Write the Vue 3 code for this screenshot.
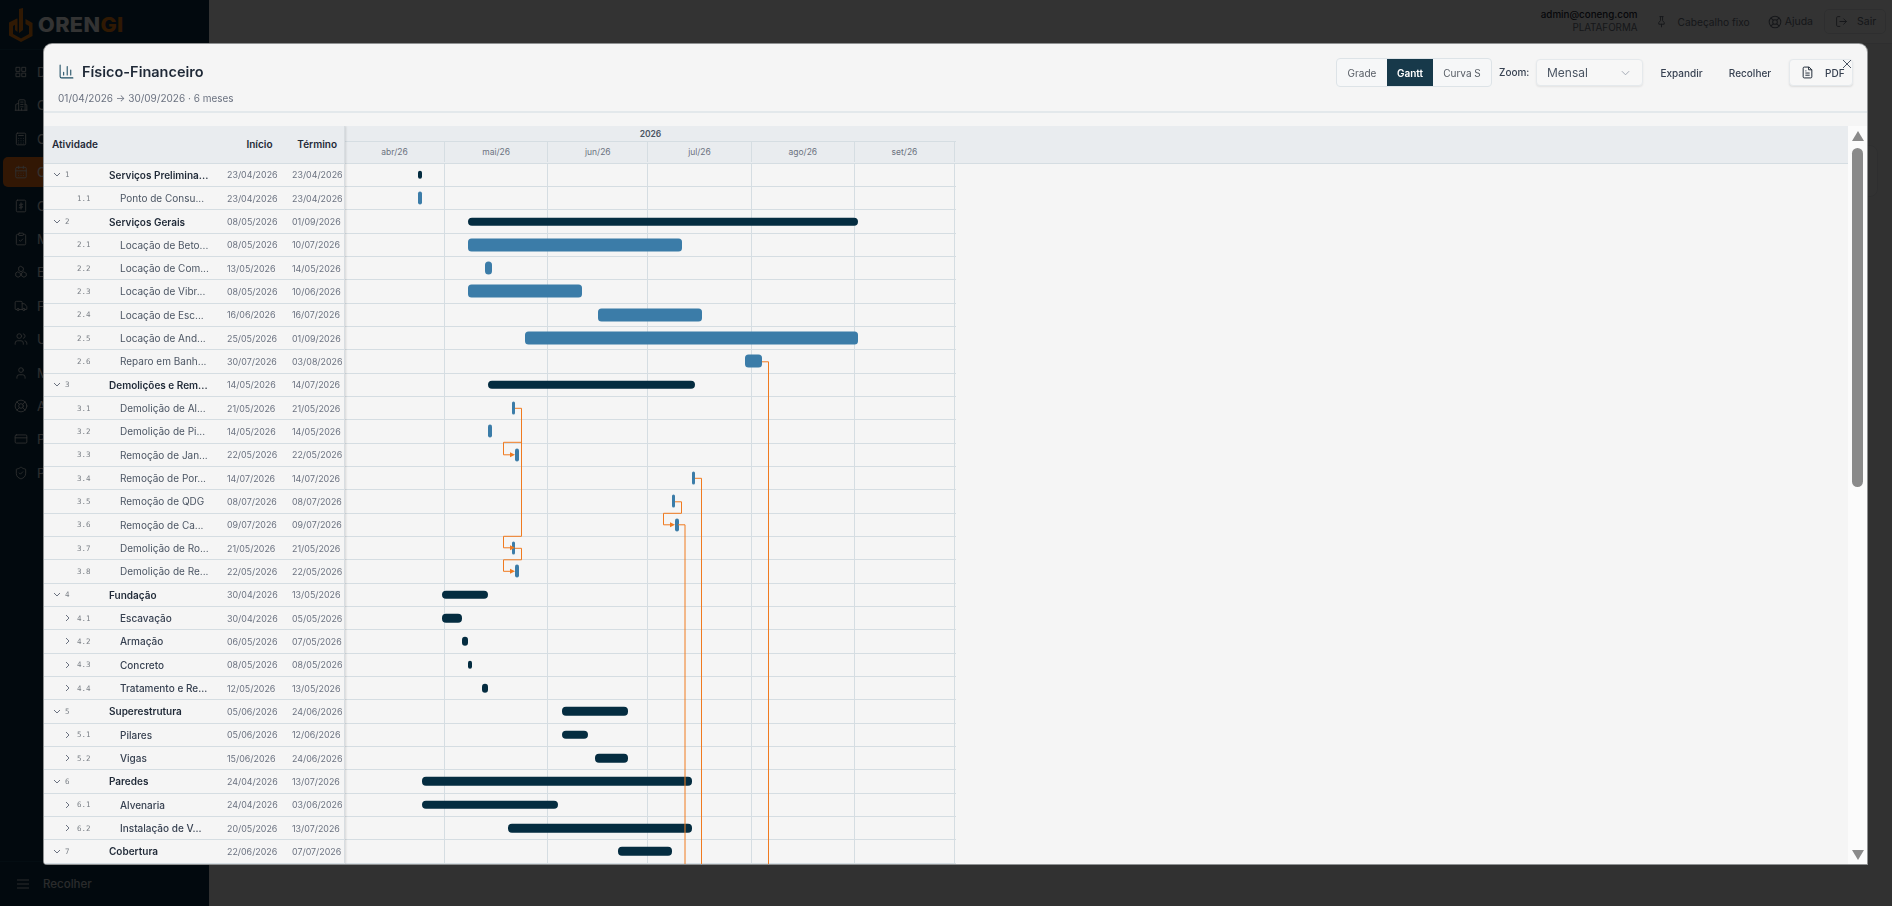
<script setup>
const navItems = [
  { label: 'Dashboard', d: 'M4 4h6v7H4zM14 4h6v7h-6zM4 14h6v6H4zM14 14h6v6h-6z' },
  { label: 'Obras', d: 'M3 21V11l5-2M8 21V5a2 2 0 0 1 2-2h7a2 2 0 0 1 2 2v16M19 11h1a2 2 0 0 1 2 2v8M2 21h20M11.500 7h4M11.500 11h4M11.500 15h4M13 21v-3' },
  { label: 'Orçamentos', d: 'M6 2h12a2 2 0 0 1 2 2v16a2 2 0 0 1-2 2H6a2 2 0 0 1-2-2V4a2 2 0 0 1 2-2zM8 6h8M8 11h.01M12 11h.01M16 11h.01M8 15h.01M12 15h.01M16 15h.01M8 19h.01M12 19h.01M16 19h.01' },
  { label: 'Cronograma', d: 'M5 4h14a2 2 0 0 1 2 2v14a2 2 0 0 1-2 2H5a2 2 0 0 1-2-2V6a2 2 0 0 1 2-2zM8 2v4M16 2v4M3 10h18M8 14h.01M12 14h.01M16 14h.01M8 18h.01M12 18h.01M16 18h.01', active: true },
  { label: 'Custos', d: 'M6 2h12a2 2 0 0 1 2 2v16a2 2 0 0 1-2 2H6a2 2 0 0 1-2-2V4a2 2 0 0 1 2-2zM12 6.500v11M15 9h-4a1.500 1.500 0 0 0 0 3h2a1.500 1.500 0 0 1 0 3H9' },
  { label: 'Medições', d: 'M9 2h6a1 1 0 0 1 1 1v2a1 1 0 0 1-1 1H9a1 1 0 0 1-1-1V3a1 1 0 0 1 1-1zM16 4h2a2 2 0 0 1 2 2v14a2 2 0 0 1-2 2H6a2 2 0 0 1-2-2V6a2 2 0 0 1 2-2h2M9 14l2 2 4-4' },
  { label: 'Estoque', d: 'M12 2.500l4 2.300v4.400l-4 2.300-4-2.300V4.800zM7 12l4 2.300v4.400L7 21l-4-2.300v-4.400zM17 12l4 2.300v4.400L17 21l-4-2.300v-4.400z' },
  { label: 'Fornecedores', d: 'M14 18V6a2 2 0 0 0-2-2H4a2 2 0 0 0-2 2v11a1 1 0 0 0 1 1h2M15 18H9M19 18h2a1 1 0 0 0 1-1v-3.650a1 1 0 0 0-.22-.62l-3.480-4.350A1 1 0 0 0 17.520 8H14M9 18a2 2 0 1 1-4 0 2 2 0 0 1 4 0zM19 18a2 2 0 1 1-4 0 2 2 0 0 1 4 0z' },
  { label: 'Usuários', d: 'M16 21v-2a4 4 0 0 0-4-4H6a4 4 0 0 0-4 4v2M13 7a4 4 0 1 1-8 0 4 4 0 0 1 8 0zM22 21v-2a4 4 0 0 0-3-3.870M16 3.130a4 4 0 0 1 0 7.750' },
  { label: 'Meu perfil', d: 'M19 21v-2a4 4 0 0 0-4-4H9a4 4 0 0 0-4 4v2M16 7a4 4 0 1 1-8 0 4 4 0 0 1 8 0z' },
  { label: 'Ajuda', d: 'M22 12a10 10 0 1 1-20 0 10 10 0 0 1 20 0zM16 12a4 4 0 1 1-8 0 4 4 0 0 1 8 0zM4.900 4.900l4.300 4.300M14.800 14.800l4.300 4.300M14.800 9.200l4.300-4.300M4.900 19.100l4.300-4.300' },
  { label: 'Planos', d: 'M4 5h16a2 2 0 0 1 2 2v10a2 2 0 0 1-2 2H4a2 2 0 0 1-2-2V7a2 2 0 0 1 2-2zM2 10h20' },
  { label: 'Privacidade', d: 'M20 13c0 5-3.500 7.500-7.660 8.950a1 1 0 0 1-.67-.01C7.500 20.500 4 18 4 13V6a1 1 0 0 1 1-1c2 0 4.500-1.200 6.240-2.720a1.170 1.170 0 0 1 1.520 0C14.510 3.810 17 5 19 5a1 1 0 0 1 1 1zM9 12l2 2 4-4' }
]

const pxPerDay = 10 / 3
const monthLengths = [30, 31, 30, 31, 31, 30]
const months = [
  { label: 'abr/26', width: 30 * pxPerDay },
  { label: 'mai/26', width: 31 * pxPerDay },
  { label: 'jun/26', width: 30 * pxPerDay },
  { label: 'jul/26', width: 31 * pxPerDay },
  { label: 'ago/26', width: 31 * pxPerDay },
  { label: 'set/26', width: 30 * pxPerDay }
]

const dayIndex = (s) => {
  const [d, m] = s.split('/').map(Number)
  let total = d - 1
  for (let i = 0; i < m - 4; i++) total += monthLengths[i]
  return total
}

// type: g = group row, s = sub-group (dark bar), t = task (blue bar)
const raw = [
  ['1', 'Serviços Prelimina...', '23/04/2026', '23/04/2026', 'g'],
  ['1.1', 'Ponto de Consu...', '23/04/2026', '23/04/2026', 't'],
  ['2', 'Serviços Gerais', '08/05/2026', '01/09/2026', 'g'],
  ['2.1', 'Locação de Beto...', '08/05/2026', '10/07/2026', 't'],
  ['2.2', 'Locação de Com...', '13/05/2026', '14/05/2026', 't'],
  ['2.3', 'Locação de Vibr...', '08/05/2026', '10/06/2026', 't'],
  ['2.4', 'Locação de Esc...', '16/06/2026', '16/07/2026', 't'],
  ['2.5', 'Locação de And...', '25/05/2026', '01/09/2026', 't'],
  ['2.6', 'Reparo em Banh...', '30/07/2026', '03/08/2026', 't'],
  ['3', 'Demolições e Rem...', '14/05/2026', '14/07/2026', 'g'],
  ['3.1', 'Demolição de Al...', '21/05/2026', '21/05/2026', 't'],
  ['3.2', 'Demolição de Pi...', '14/05/2026', '14/05/2026', 't'],
  ['3.3', 'Remoção de Jan...', '22/05/2026', '22/05/2026', 't'],
  ['3.4', 'Remoção de Por...', '14/07/2026', '14/07/2026', 't'],
  ['3.5', 'Remoção de QDG', '08/07/2026', '08/07/2026', 't'],
  ['3.6', 'Remoção de Ca...', '09/07/2026', '09/07/2026', 't'],
  ['3.7', 'Demolição de Ro...', '21/05/2026', '21/05/2026', 't'],
  ['3.8', 'Demolição de Re...', '22/05/2026', '22/05/2026', 't'],
  ['4', 'Fundação', '30/04/2026', '13/05/2026', 'g'],
  ['4.1', 'Escavação', '30/04/2026', '05/05/2026', 's'],
  ['4.2', 'Armação', '06/05/2026', '07/05/2026', 's'],
  ['4.3', 'Concreto', '08/05/2026', '08/05/2026', 's'],
  ['4.4', 'Tratamento e Re...', '12/05/2026', '13/05/2026', 's'],
  ['5', 'Superestrutura', '05/06/2026', '24/06/2026', 'g'],
  ['5.1', 'Pilares', '05/06/2026', '12/06/2026', 's'],
  ['5.2', 'Vigas', '15/06/2026', '24/06/2026', 's'],
  ['6', 'Paredes', '24/04/2026', '13/07/2026', 'g'],
  ['6.1', 'Alvenaria', '24/04/2026', '03/06/2026', 's'],
  ['6.2', 'Instalação de V...', '20/05/2026', '13/07/2026', 's'],
  ['7', 'Cobertura', '22/06/2026', '07/07/2026', 'g']
]

const rows = raw.map(([code, name, start, end, type]) => {
  const a = dayIndex(start)
  const b = dayIndex(end)
  return {
    code, name, start, end, type,
    barStyle: {
      left: (a * pxPerDay).toFixed(2) + 'px',
      width: Math.max((b - a + 1) * pxPerDay, 3.6).toFixed(2) + 'px'
    }
  }
})

const links = [
  'M515 408H521.500V536H503.500V547.500H511',
  'M521.500 442H503.500V454.500H511',
  'M515 548H521.500V559.500H503.500V571H511',
  'M675 501.500H681.500V513H663.500V524.500H671',
  'M678 524.500H685V864',
  'M695 478H701.500V864',
  'M762 361.500H768.500V864'
]
const arrows = [
  '510,545 515,547.500 510,550',
  '510,452 515,454.500 510,457',
  '510,568.500 515,571 510,573.500',
  '670,522 675,524.500 670,527'
]
</script>

<template>
  <div class="page">
    <aside class="sidebar">
      <div class="brand">
        <svg class="brand-mark" viewBox="0 0 26 34" width="26" height="34">
          <path d="M9 12.500v5l-4 2.500v8l8 4.500 8-4.500v-8l-3.500-2v-5l7 4v13L13 36 1 29.500v-13z" fill="#f07f13" transform="translate(0 -2)" />
          <path d="M11 1l4-1v22l-4 3zM7 12l2.500-1.500V24L7 22z" fill="#f07f13" />
        </svg>
        <span class="brand-name">OREN<em>GI</em></span>
      </div>
      <nav class="nav">
        <a v-for="item in navItems" :key="item.label" class="nav-item" :class="{ active: item.active }">
          <svg viewBox="0 0 24 24" width="14" height="14" class="nav-icon"><path :d="item.d" /></svg>
          <span>{{ item.label }}</span>
        </a>
      </nav>
      <div class="side-foot">
        <svg viewBox="0 0 12 10" width="12" height="10"><path d="M0 1h12M0 5h12M0 9h12" /></svg>
        <span>Recolher</span>
      </div>
    </aside>

    <main class="main">
      <header class="topbar">
        <div class="account">
          <strong>admin@coneng.com</strong>
          <span>PLATAFORMA</span>
        </div>
        <span class="top-link pin">
          <svg viewBox="0 0 24 24" width="13" height="13"><path d="M12 17v5M9 3h6M10 3v7.500l-3 3.500v3h10v-3l-3-3.500V3" /></svg>
          Cabeçalho fixo
        </span>
        <span class="top-link help">
          <svg viewBox="0 0 24 24" width="14" height="14"><path d="M22 12a10 10 0 1 1-20 0 10 10 0 0 1 20 0zM16 12a4 4 0 1 1-8 0 4 4 0 0 1 8 0zM4.900 4.900l4.300 4.300M14.800 14.800l4.300 4.300M14.800 9.200l4.300-4.300M4.900 19.100l4.300-4.300" /></svg>
          Ajuda
        </span>
        <span class="logout">
          <svg viewBox="0 0 24 24" width="13" height="13"><path d="M9 3H5a2 2 0 0 0-2 2v14a2 2 0 0 0 2 2h4M16 17l5-5-5-5M21 12H9" /></svg>
          Sair
        </span>
      </header>
      <div class="content">
        <div class="bg-card"></div>
      </div>
    </main>

    <div class="overlay">
      <section class="modal">
        <header class="modal-head">
          <div class="head-text">
            <h2>
              <svg viewBox="0 0 24 24" width="17" height="17"><path d="M3 3v16a2 2 0 0 0 2 2h16M8 17v-4M13 17V5M18 17v-7" /></svg>
              Físico-Financeiro
            </h2>
            <p>01/04/2026 → 30/09/2026 · 6 meses</p>
          </div>
          <div class="tools">
            <div class="segment">
              <button class="seg-grade">Grade</button>
              <button class="seg-gantt">Gantt</button>
              <button class="seg-curve">Curva S</button>
            </div>
            <span class="zoom-label">Zoom:</span>
            <div class="select">
              <span>Mensal</span>
              <svg viewBox="0 0 10 6" width="9" height="6"><path d="M1 1l4 4 4-4" /></svg>
            </div>
            <button class="plain expand">Expandir</button>
            <button class="plain collapse">Recolher</button>
            <button class="pdf">
              <svg viewBox="0 0 24 24" width="13" height="13"><path d="M15 2H6a2 2 0 0 0-2 2v16a2 2 0 0 0 2 2h12a2 2 0 0 0 2-2V7zM14 2v5h6M8 13h8M8 17h8M8 9h2" /></svg>
              PDF
            </button>
          </div>
          <svg class="close" viewBox="0 0 10 10" width="10" height="10"><path d="M1 1l8 8M9 1l-8 8" /></svg>
        </header>

        <div class="gantt">
          <div class="table">
            <div class="table-head">
              <span class="th-name">Atividade</span>
              <span class="th-start">Início</span>
              <span class="th-end">Término</span>
            </div>
            <div v-for="r in rows" :key="r.code" class="tr" :class="'type-' + r.type">
              <div class="tree">
                <span class="chev">
                  <svg v-if="r.type === 'g'" viewBox="0 0 8 5" width="8" height="5"><path d="M1 1l3 3 3-3" /></svg>
                  <svg v-else-if="r.type === 's'" viewBox="0 0 5 8" width="5" height="8"><path d="M1 1l3 3-3 3" /></svg>
                </span>
                <span class="code">{{ r.code }}</span>
                <span class="name">{{ r.name }}</span>
              </div>
              <span class="date">{{ r.start }}</span>
              <span class="date">{{ r.end }}</span>
            </div>
          </div>

          <div class="timeline">
            <div class="tl-head">
              <div class="tl-year">2026</div>
              <div class="tl-months">
                <div v-for="m in months" :key="m.label" class="tl-month" :style="{ width: m.width + 'px' }">{{ m.label }}</div>
              </div>
            </div>
            <div class="chart">
              <div v-for="r in rows" :key="r.code" class="chart-row">
                <div v-for="m in months" :key="m.label" class="chart-cell" :style="{ width: m.width + 'px' }"></div>
                <div class="bar" :class="r.type === 't' ? 'bar-task' : 'bar-dark'" :style="r.barStyle"></div>
              </div>
              <svg class="links" width="611" height="701" viewBox="345 163.700 611 701">
                <path v-for="(d, i) in links" :key="i" :d="d" />
                <polygon v-for="(p, i) in arrows" :key="'a' + i" :points="p" />
              </svg>
            </div>
          </div>

          <div class="scrollbar">
            <i class="arrow-up"></i>
            <i class="thumb"></i>
            <i class="arrow-down"></i>
          </div>
        </div>
      </section>
    </div>
  </div>
</template>

<style scoped>
.page { display: flex; height: 906px; width: 1892px; overflow: hidden; background: #f5f5f5; font-family: Inter, "Liberation Sans", sans-serif; position: relative; }
.sidebar { width: 209px; flex: none; background: #0b3147; display: flex; flex-direction: column; color: #e5e7eb; }
.brand { height: 50px; box-sizing: border-box; display: flex; align-items: center; padding: 1px 0 0 8px; gap: 4px; border-bottom: 1px solid #14405a; }
.brand-mark { flex: none; }
.brand-name { font: 800 20px/1 Inter, sans-serif; letter-spacing: 0.4px; color: #fff; transform: scaleX(1.08); transform-origin: left; }
.brand-name em { font-style: normal; color: #f07f13; }
.nav { flex: 1; padding: 7px 0 0 3px; }
.nav-item { display: flex; align-items: center; height: 30px; margin-bottom: 3.4px; padding-left: 11px; gap: 9px; border-radius: 5px; font-size: 13px; color: #e5e7eb; width: 200px; box-sizing: border-box; }
.nav-item.active { background: #f97316; color: #fff; }
.nav-icon { fill: none; stroke: #e5e7eb; stroke-width: 1.500; stroke-linecap: round; stroke-linejoin: round; flex: none; }
.side-foot { height: 44px; border-top: 1px solid #14405a; display: flex; align-items: center; gap: 14px; padding-left: 17px; font-size: 11.500px; font-weight: 500; color: #d1d5db; }
.side-foot svg { stroke: #d1d5db; fill: none; }
.main { flex: 1; min-width: 0; display: flex; flex-direction: column; }
.topbar { height: 44px; box-sizing: border-box; border-bottom: 1px solid #e5e7eb; display: flex; align-items: center; justify-content: flex-end; padding-right: 6px; background: #fff; font-size: 10.200px; color: #6b7280; }
.account { display: flex; flex-direction: column; align-items: flex-end; line-height: 13px; margin-right: 17px; margin-top: -1px; }
.account strong { font-weight: 500; color: #1f2937; font-size: 9.800px; }
.account span { color: #6b7280; font-size: 9.800px; }
.top-link { display: flex; align-items: center; }
.top-link svg, .logout svg { fill: none; stroke: #6b7280; stroke-width: 1.800; stroke-linecap: round; stroke-linejoin: round; }
.pin { gap: 10px; margin-right: 18px; }
.help { gap: 3px; margin-right: 11px; font-size: 10.500px; }
.logout { display: flex; align-items: center; gap: 9px; height: 25px; width: 62px; box-sizing: border-box; padding-left: 10px; border: 1px solid #e5e7eb; border-radius: 5px; font-size: 10.500px; }
.content { flex: 1; padding: 101px 14px 0 0; display: flex; justify-content: flex-end; }
.bg-card { width: 400px; height: 52px; box-sizing: border-box; border: 1px solid #e5e7eb; background: #fafafa; border-radius: 8px; }

.overlay { position: absolute; inset: 0; background: rgba(0, 0, 0, .8); backdrop-filter: blur(.6px); }
.modal { position: absolute; left: 44px; top: 44px; width: 1823px; height: 820px; background: #f5f5f5; border-radius: 8px 8px 0 3px; box-shadow: 0 0 0 1px #8f9192; display: flex; flex-direction: column; overflow: hidden; color: #1f2937; }
.modal-head { height: 69px; flex: none; box-sizing: border-box; border-bottom: 2px solid #e3e8eb; display: flex; justify-content: space-between; padding: 14px 14px 0 14px; position: relative; }
.head-text h2 { margin: 0; display: flex; align-items: center; gap: 7px; font-size: 14.500px; line-height: 19px; font-weight: 600; color: #1f2937; padding-top: 4px; }
.head-text svg { fill: none; stroke: #1d4c62; stroke-width: 1.500; stroke-linecap: round; stroke-linejoin: round; flex: none; }
.head-text p { margin: 11px 0 0; font-size: 10px; line-height: 13px; color: #6b7280; }
.tools { display: flex; align-items: flex-start; font-size: 10px; color: #374151; }
.tools button { font: inherit; background: none; border: 0; padding: 0; color: inherit; }
.segment { display: flex; height: 29px; box-sizing: border-box; border: 1px solid #dde3e7; border-radius: 4px; overflow: hidden; background: #f6f7f8; color: #555b63; }
.segment button { height: 100%; color: #555b63; }
.seg-grade { width: 50px; }
.tools .seg-gantt { width: 46px; background: #17394a; color: #fff; font-weight: 600; }
.seg-curve { width: 58px; }
.zoom-label { margin: 7px 7px 0 7px; line-height: 15px; font-weight: 500; width: 30px; }
.select { width: 107px; height: 27px; margin-top: 1px; box-sizing: border-box; border: 1px solid #e5e9ec; border-radius: 4px; background: #f7f7f7; box-shadow: 0 1px 2px rgba(0, 0, 0, .08); display: flex; align-items: center; justify-content: space-between; padding: 0 12px 0 10px; font-size: 12px; color: #4b5563; }
.select svg { fill: none; stroke: #9ca3af; stroke-width: 1; }
.tools .plain { height: 29px; font-weight: 500; color: #374151; }
.tools .expand { width: 67px; margin-left: 5px; }
.tools .collapse { width: 66px; margin-left: 2px; }
.tools .pdf { width: 64px; height: 27px; margin: 1px 0 0 6px; box-sizing: border-box; border: 1px solid #e5e9ec; border-radius: 4px; background: #f7f7f7; box-shadow: 0 1px 2px rgba(0, 0, 0, .1); display: flex; align-items: center; padding-left: 11px; gap: 11px; font-weight: 500; }
.pdf svg { fill: none; stroke: #1f2937; stroke-width: 1.800; stroke-linejoin: round; }
.close { position: absolute; right: 15px; top: 15px; fill: none; stroke: #4b5563; stroke-width: 1; }

.gantt { flex: 1; min-height: 0; margin-top: 13px; display: flex; overflow: hidden; }
.table { width: 301px; flex: none; box-sizing: border-box; border-right: 1px solid #d8dde1; box-shadow: 1px 0 2px rgba(0, 0, 0, .12); position: relative; z-index: 1; background: #f5f5f5; }
.table-head { height: 37.700px; box-sizing: border-box; background: #e9ecef; border-bottom: 1px solid #d5dde2; display: grid; grid-template-columns: 183px 45.500px 64.500px; align-items: center; font-size: 10px; font-weight: 600; color: #1f2937; }
.th-name { padding-left: 8px; }
.th-start, .th-end { text-align: right; }
.tr { height: 23.330px; box-sizing: border-box; border-bottom: 1px solid #d5dde2; display: grid; grid-template-columns: 183px 65px 52px; align-items: center; }
.tree { display: flex; align-items: center; padding-left: 8px; }
.type-t .tree, .type-s .tree { padding-left: 20px; }
.chev { width: 12px; margin-left: 1px; flex: none; display: flex; align-items: center; }
.chev svg { fill: none; stroke: #6b7280; stroke-width: 1; }
.code { width: 43px; flex: none; font: 7.500px "DejaVu Sans Mono", monospace; color: #7b8087; }
.type-g .code { width: 44px; }
.name { font-size: 10px; white-space: nowrap; }
.type-g .name { font-weight: 600; color: #1f2937; }
.type-t .name { color: #4b5563; }
.type-s .name { font-weight: 500; color: #374151; }
.date { font-size: 8.900px; color: #6b7280; }

.timeline { flex: 1; min-width: 0; overflow: hidden; }
.tl-head { height: 37.700px; box-sizing: border-box; background: #e9ecef; border-bottom: 1px solid #d5dde2; }
.tl-year { width: 611px; height: 16px; box-sizing: border-box; text-align: center; font-size: 8.500px; line-height: 16px; font-weight: 600; color: #4b5563; border-bottom: 1px solid #d5dde2; }
.tl-months { display: flex; height: 20px; width: 611px; }
.tl-month { flex: none; box-sizing: border-box; border-right: 1px solid #d5dde2; text-align: center; font-size: 8.500px; line-height: 20px; color: #6b7280; }
.chart { position: relative; width: 611px; }
.chart-row { display: flex; height: 23.330px; box-sizing: border-box; border-bottom: 1px solid #d5dde2; position: relative; }
.chart-cell { flex: none; box-sizing: border-box; border-right: 1px solid #d5dde2; }
.bar { position: absolute; top: 50%; transform: translateY(-50%); }
.bar-task { height: 13px; background: #3b7ca8; border-radius: 3.500px; }
.bar-dark { height: 8.500px; background: #042c40; border-radius: 4px; }
.links { position: absolute; left: 0; top: 0; overflow: visible; pointer-events: none; }
.links path { fill: none; stroke: #f07a1f; stroke-width: 1; }
.links polygon { fill: #f07a1f; }

.scrollbar { width: 19px; flex: none; background: #fbfbfb; display: flex; flex-direction: column; align-items: center; padding-top: 5px; position: relative; }
.arrow-up { width: 0; height: 0; border: 6.500px solid transparent; border-top: 0; border-bottom: 10px solid #8a8a8a; }
.thumb { width: 11px; height: 339px; margin-top: 7px; background: #8a8a8a; border-radius: 6px; }
.arrow-down { position: absolute; bottom: 4px; width: 0; height: 0; border: 6.500px solid transparent; border-bottom: 0; border-top: 10px solid #8a8a8a; }
</style>

<style>
html, body { margin: 0; overflow: hidden; }
</style>
